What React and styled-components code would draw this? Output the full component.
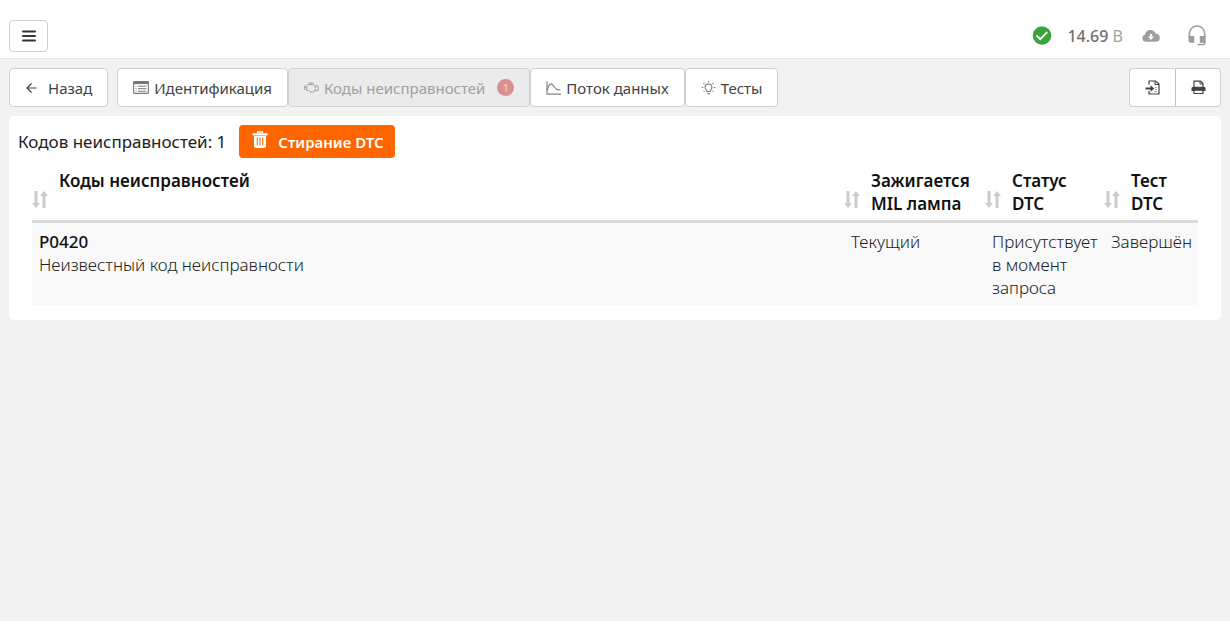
import React from "react";
import styled, { createGlobalStyle, css } from "styled-components";

const GlobalStyle = createGlobalStyle`
  *, *::before, *::after { box-sizing: border-box; }
  body {
    margin: 0;
    background: #fff;
    color: #212121;
    font: 400 16px/23px "Noto Sans", "Open Sans", sans-serif;
  }
`;

const Page = styled.div`
  min-height: calc(100vh - 7px);
  background: #f2f2f2;
`;

const TopBar = styled.header`
  display: flex;
  align-items: center;
  justify-content: space-between;
  height: 59px;
  padding: 13px 9px 0;
  background: #fff;
  border-bottom: 1px solid #e6e6e6;
`;

const buttonBase = css`
  display: inline-flex;
  align-items: center;
  justify-content: center;
  margin: 0;
  background: #fff;
  border: 1px solid #d0d0d0;
  border-radius: 4px;
  color: #424242;
  font: inherit;
  cursor: pointer;
  svg { display: block; flex: none; }
`;

const MenuButton = styled.button`
  ${buttonBase}
  width: 39px;
  height: 32px;
  padding: 0;
  color: #333;
`;

const Status = styled.div`
  display: flex;
  align-items: center;
  padding-right: 15px;
  color: #9a9fa3;
  svg { display: block; flex: none; }
`;

const Voltage = styled.span`
  margin: 0 19px 0 15px;
  font-size: 16px;
  line-height: 24px;
  color: #a3a3a3;
  strong { font-weight: 500; color: #707070; }
`;

const StatusButton = styled.button`
  display: flex;
  margin: 0 0 0 ${(p) => p.$gap || 0}px;
  padding: 0;
  border: 0;
  background: none;
  color: inherit;
  cursor: pointer;
`;

const Toolbar = styled.nav`
  display: flex;
  gap: 9px;
  padding: 9px;
`;

const Group = styled.div`
  display: flex;
  &:last-child { margin-left: auto; }
`;

const ToolButton = styled.button`
  ${buttonBase}
  height: 39px;
  padding: 0 15px;
  gap: ${(p) => p.$gap || 5}px;
  font-size: 15px;
  line-height: 24px;
  white-space: nowrap;
  &:disabled {
    background: #ebebeb;
    color: #a0a0a0;
    cursor: default;
  }
`;

const IconButton = styled.button`
  ${buttonBase}
  width: 46px;
  height: 39px;
  padding: 0;
  &:first-child { border-radius: 4px 0 0 4px; border-right: 0; }
  &:last-child { border-radius: 0 4px 4px 0; border-left-color: #c0c0c0; }
`;

const Badge = styled.span`
  width: 17px;
  height: 17px;
  margin-left: 7px;
  border-radius: 50%;
  background: #dc8f8f;
  color: #f3dcdc;
  font-size: 11px;
  line-height: 17px;
  text-align: center;
`;

const Card = styled.main`
  margin: 0 9px;
  padding: 9px 9px 15px;
  background: #fff;
  border-radius: 5px;
`;

const Summary = styled.div`
  display: flex;
  align-items: center;
  gap: 13px;
  font-size: 17px;
`;

const EraseButton = styled.button`
  ${buttonBase}
  align-items: flex-start;
  height: 33px;
  padding: 6px 12px 0 13px;
  gap: 10px;
  background: #ff6600;
  border: 0;
  color: #fff;
  font-size: 15px;
  font-weight: 600;
`;

const TableWrap = styled.div`
  padding: 11px 14px 0;
`;

const Table = styled.table`
  width: 100%;
  table-layout: fixed;
  border-collapse: collapse;
`;

const HeadCell = styled.th`
  width: ${(p) => (p.$width ? p.$width + "px" : "auto")};
  padding: 0 0 5px;
  border-bottom: 3px solid #dcdcdc;
  vertical-align: top;
  text-align: left;
  font-size: 17px;
  font-weight: 600;
  color: #111;
`;

const SortButton = styled.button`
  display: flex;
  width: 100%;
  height: 46px;
  padding: 0 7px 0 0;
  gap: 11px;
  border: 0;
  background: none;
  color: inherit;
  font: inherit;
  line-height: 23px;
  text-align: left;
  cursor: pointer;
  svg { flex: none; margin-top: 22px; color: #ccc; }
`;

const Cell = styled.td`
  padding: 7px 6px 6px 7px;
  background: #f9f9f9;
  vertical-align: top;
  font-size: 17px;
  font-weight: 300;
`;

const Code = styled.div`
  font-weight: 500;
  color: #111;
`;

const Svg = ({ w, h = w, children }) => (
  <svg width={w} height={h} viewBox={`0 0 ${w} ${h}`} fill="none" stroke="currentColor" aria-hidden="true">
    {children}
  </svg>
);

const MenuIcon = () => (
  <Svg w={14} h={12}>
    <path d="M1 1.500h12M1 6h12M1 10.500h12" strokeWidth="2" strokeLinecap="round" />
  </Svg>
);
const ArrowIcon = () => (
  <Svg w={12} h={12}>
    <path d="M6.500 1.500 2 6l4.500 4.500M2 6h9.500" strokeWidth="1.200" />
  </Svg>
);
const ListIcon = () => (
  <Svg w={16} h={13}>
    <rect x=".6" y=".6" width="14.8" height="11.8" rx="1" strokeWidth="1.1" stroke="#777" />
    <path d="M.5 1.8h15" strokeWidth="2.6" stroke="#777" />
    <path d="M5 5.2h8.5M5 7.7h8.5M5 10.2h8.5" strokeWidth="1" stroke="#777" />
    <path d="M2.5 5.2h1M2.5 7.7h1M2.5 10.2h1" strokeWidth="1" stroke="#777" />
  </Svg>
);
const EngineIcon = () => (
  <Svg w={15} h={11}>
    <path
      d="M4.500 1h5M7 1v1.500M.7 3.500v4.500M.7 5.500h2M2.700 3.900 4 2.500h5.200l1.700 1.500v1.200h1V3.700l1.700.2.6.5v3.800l-.6.6-1.700.1V7.500h-1v1.300l-1.100 1.200H5.900L4.300 8.400H2.700Z"
      strokeWidth="1"
    />
  </Svg>
);
const ChartIcon = () => (
  <Svg w={15} h={14}>
    <path d="M1 .5V13.200h14" stroke="#858585" strokeWidth="1.200" />
    <path d="M1.200 9.500C3 2.200 5.200 1.500 7.500 4.800c1.900 3 2.900 4.500 6.800 4" stroke="#858585" strokeWidth="1.200" />
  </Svg>
);
const BulbIcon = () => (
  <Svg w={15} h={14}>
    <path
      d="M5.900 10.500C5.900 9 4.100 8.400 4.100 6.400a3.400 3.400 0 0 1 6.800 0c0 2-1.800 2.600-1.800 4.100ZM6 12.800h3"
      stroke="#777"
      strokeWidth="1.100"
    />
    <path d="M7.500.2v1.400M2.500 2.100l1 1M12.500 2.100l-1 1M.7 6.500h1.600M12.700 6.500h1.600M2.600 10.600l.9-.8M12.400 10.600l-.9-.8" stroke="#777" strokeWidth="1.100" />
  </Svg>
);
const ImportIcon = () => (
  <Svg w={15} h={15}>
    <path d="M4 4.500V1h6.500L14 4v10H4v-3" strokeWidth="1.200" />
    <path d="M10 1v3.500h4" strokeWidth="1" />
    <path d="M.5 8.500H7" strokeWidth="2" />
    <path d="M5.500 5.200 9.300 8.500 5.500 11.800Z" fill="currentColor" stroke="none" />
    <path d="M10 7.500h2M10 9.500h2M9 11.500h3" strokeWidth=".7" stroke="#888" />
  </Svg>
);
const PrintIcon = () => (
  <Svg w={15} h={15}>
    <path d="M3 7V1.200h6.500L12 3.500V7" strokeWidth="1.200" />
    <path d="M9 1v3h3" strokeWidth="1" />
    <path d="M2 6.800h11a1.500 1.500 0 0 1 1.500 1.500v2.700H.5V8.300A1.500 1.500 0 0 1 2 6.800Z" fill="currentColor" stroke="none" />
    <path d="M3 10.200v3.300h9v-3.300Z" fill="#fff" strokeWidth="1.200" />
  </Svg>
);
const CheckIcon = () => (
  <Svg w={20}>
    <circle cx="10" cy="9.500" r="9.300" fill="#37a53a" stroke="none" />
    <path d="m4.500 9.500 3.700 3.700 7-7" stroke="#fff" strokeWidth="1.900" />
  </Svg>
);
const CloudIcon = () => (
  <Svg w={18} h={12}>
    <path
      d="M4 11.800A3.800 3.800 0 0 1 3 4.400 5.500 5.500 0 0 1 13.600 3.800 4 4 0 0 1 14 11.800Z"
      fill="currentColor"
      stroke="none"
    />
    <path d="M9 4v4" stroke="#fff" strokeWidth="2" />
    <path d="M5.900 6.600h6.200L9 9.900Z" fill="#fff" stroke="none" />
  </Svg>
);
const HeadsetIcon = () => (
  <Svg w={18} h={21}>
    <path d="M1.300 13V8.700a7.700 7.700 0 0 1 15.400 0V18.500q0 1-1 1H9.500" strokeWidth="1.600" />
    <path d="M.6 11h5.600v6.800H2.600a2 2 0 0 1-2-2ZM17.400 11h-5.600v6.800h5.600Z" fill="currentColor" stroke="none" />
  </Svg>
);
const TrashIcon = () => (
  <Svg w={16} h={17}>
    <path d="M5.500 2.500V1h5v1.500" strokeWidth="1.300" />
    <path d="M.5 2.300h15v2.200H.5ZM2 5h12v10a2 2 0 0 1-2 2H4a2 2 0 0 1-2-2Z" fill="currentColor" stroke="none" />
    <path d="M5.300 6.500v8M8 6.500v8M10.700 6.500v8" stroke="#ff6600" strokeWidth="1" />
  </Svg>
);
const SortIcon = () => (
  <Svg w={16} h={17}>
    <path d="M4 0v13M12 17V4" strokeWidth="3" />
    <path d="M0 12h8l-4 5ZM8 5h8l-4-5Z" fill="currentColor" stroke="none" />
  </Svg>
);

const columns = [
  { title: "Коды неисправностей" },
  { title: "Зажигается MIL лампа", width: 141 },
  { title: "Статус DTC", width: 119 },
  { title: "Тест DTC", width: 94 },
];

export default function App() {
  return (
    <>
      <GlobalStyle />
      <Page>
        <TopBar>
          <MenuButton aria-label="Меню"><MenuIcon /></MenuButton>
          <Status>
            <CheckIcon />
            <Voltage><strong>14.69</strong> В</Voltage>
            <StatusButton aria-label="Загрузка"><CloudIcon /></StatusButton>
            <StatusButton aria-label="Поддержка" $gap={28}><HeadsetIcon /></StatusButton>
          </Status>
        </TopBar>
        <Toolbar>
          <ToolButton $gap={11}><ArrowIcon />Назад</ToolButton>
          <Group>
            <ToolButton><ListIcon />Идентификация</ToolButton>
            <ToolButton disabled><EngineIcon />Коды неисправностей<Badge>1</Badge></ToolButton>
            <ToolButton><ChartIcon />Поток данных</ToolButton>
            <ToolButton><BulbIcon />Тесты</ToolButton>
          </Group>
          <Group>
            <IconButton aria-label="Экспорт"><ImportIcon /></IconButton>
            <IconButton aria-label="Печать"><PrintIcon /></IconButton>
          </Group>
        </Toolbar>
        <Card>
          <Summary>
            <span>Кодов неисправностей: 1</span>
            <EraseButton><TrashIcon /><span>Стирание DTC</span></EraseButton>
          </Summary>
          <TableWrap>
            <Table>
              <thead>
                <tr>
                  {columns.map((c) => (
                    <HeadCell key={c.title} $width={c.width} scope="col">
                      <SortButton><SortIcon /><span>{c.title}</span></SortButton>
                    </HeadCell>
                  ))}
                </tr>
              </thead>
              <tbody>
                <tr>
                  <Cell><Code>P0420</Code>Неизвестный код неисправности</Cell>
                  <Cell>Текущий</Cell>
                  <Cell>Присутствует в момент запроса</Cell>
                  <Cell>Завершён</Cell>
                </tr>
              </tbody>
            </Table>
          </TableWrap>
        </Card>
      </Page>
    </>
  );
}
